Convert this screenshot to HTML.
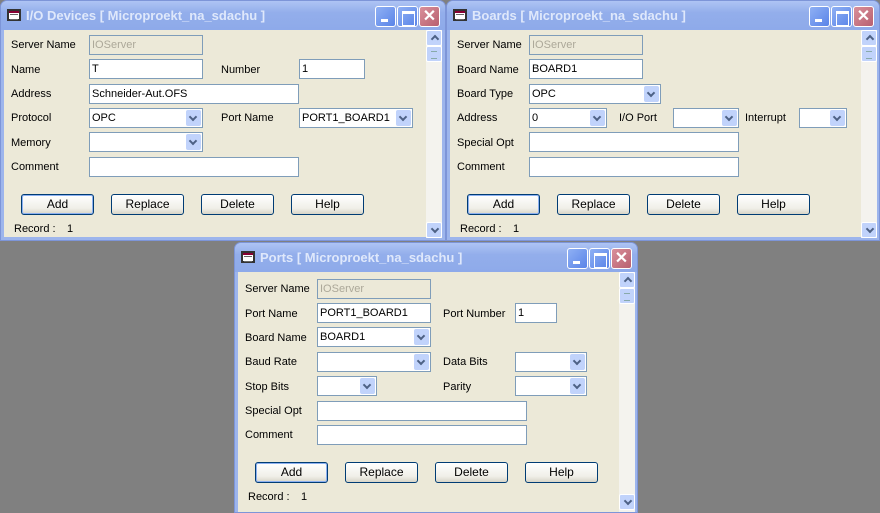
<!DOCTYPE html>
<html><head><meta charset="utf-8"><style>
*{box-sizing:border-box;margin:0;padding:0}
body{width:880px;height:513px;background:#808080;position:relative;overflow:hidden;font-family:"Liberation Sans",Tahoma,sans-serif;font-size:11px;color:#000}
.win{position:absolute;background:#9db5ec;border-radius:7px 7px 0 0;border:1px solid #7d95d8}
.tb{position:absolute;left:0;top:0;right:0;height:29px;border-radius:6px 6px 0 0;background:linear-gradient(#aec4f4,#93aeeb 40%,#8eaaea)}
.tt{position:absolute;left:25px;top:7px;color:#dfe8fb;font-weight:bold;font-size:13px;white-space:nowrap}
.ic{position:absolute;left:6px;top:8px;width:14px;height:12px;background:#fff;border:2px solid #333;box-shadow:inset 0 2px 0 #803}
.ic:after{content:"";position:absolute;left:1px;top:3px;width:8px;height:4px;border-top:1px solid #666;border-bottom:1px solid #666}
.bt{position:absolute;top:5px;width:21px;height:21px;border:1px solid #fff;border-radius:3px;background:linear-gradient(135deg,#8fb0f4,#5a84e8);color:#fff;font-weight:bold;text-align:center}
.bt.x{background:linear-gradient(135deg,#d98f9a,#b86070);font-size:16px;line-height:19px}
.bt.mn:after{content:"";position:absolute;left:5px;top:12px;width:7px;height:3px;background:#fff}
.bt.mx:after{content:"";position:absolute;left:4px;top:4px;width:11px;height:11px;border:1px solid #fff;border-top:3px solid #fff}
.cl{position:absolute;left:3px;top:29px;right:3px;bottom:3px;background:#ece9d8}
.l{position:absolute;white-space:nowrap}
.i{position:absolute;background:#fff;border:1px solid #7f9db9;height:20px;padding:3px 0 0 2px;white-space:nowrap;font-size:11px;overflow:hidden}
.i.d{background:#ece9d8;color:#aca899}
.c:after{content:"";position:absolute;right:1px;top:1px;width:15px;height:16px;background:#c1d3fb;border-radius:2px}
.c:before{content:"";position:absolute;right:6px;top:5px;width:4px;height:4px;border-right:2px solid #4d6185;border-bottom:2px solid #4d6185;transform:rotate(45deg);z-index:1}
.b{position:absolute;width:73px;height:21px;border:1px solid #003c74;border-radius:3px;background:linear-gradient(#fff,#f0efe8 70%,#d8d5c8);text-align:center;line-height:19px;font-size:12px}
.b.def{box-shadow:inset 0 0 0 1px #8cb0f0}
.sb{position:absolute;width:16px;background:#f4f3ee}
.sa{position:absolute;left:0;width:16px;height:16px;background:#c1d3fb;border:1px solid #fff;border-radius:2px}
.sa.u:after,.sa.dn:after{content:"";position:absolute;left:5px;width:4px;height:4px;border-left:2px solid #4d6185;border-top:2px solid #4d6185;transform:rotate(45deg);top:5px}
.sa.dn:after{transform:rotate(225deg);top:3px}
.sa.t:after{content:"";position:absolute;left:4px;top:4px;width:6px;height:6px;border-top:1px solid #8aa;border-bottom:1px solid #8aa}
</style></head><body>

<!-- I/O Devices -->
<div class="win" style="left:0;top:0;width:446px;height:241px">
<div class="tb"><div class="ic"></div><div class="tt">I/O Devices [ Microproekt_na_sdachu ]</div>
<div class="bt mn" style="left:374px"></div><div class="bt mx" style="left:396px"></div><div class="bt x" style="left:418px">✕</div></div>
<div class="cl"></div>
<div class="sb" style="left:425px;top:29px;height:208px"><div class="sa u" style="top:0"></div><div class="sa t" style="top:16px"></div><div class="sa dn" style="top:192px"></div></div>
<span class="l" style="left:10px;top:38px">Server Name</span><div class="i d" style="left:88px;top:34px;width:114px">IOServer</div>
<span class="l" style="left:10px;top:63px">Name</span><div class="i" style="left:88px;top:58px;width:114px">T</div>
<span class="l" style="left:220px;top:63px">Number</span><div class="i" style="left:298px;top:58px;width:66px">1</div>
<span class="l" style="left:10px;top:87px">Address</span><div class="i" style="left:88px;top:83px;width:210px">Schneider-Aut.OFS</div>
<span class="l" style="left:10px;top:111px">Protocol</span><div class="i c" style="left:88px;top:107px;width:114px">OPC</div>
<span class="l" style="left:220px;top:111px">Port Name</span><div class="i c" style="left:298px;top:107px;width:114px">PORT1_BOARD1</div>
<span class="l" style="left:10px;top:136px">Memory</span><div class="i c" style="left:88px;top:131px;width:114px"></div>
<span class="l" style="left:10px;top:160px">Comment</span><div class="i" style="left:88px;top:156px;width:210px"></div>
<div class="b def" style="left:20px;top:193px">Add</div><div class="b" style="left:110px;top:193px">Replace</div><div class="b" style="left:200px;top:193px">Delete</div><div class="b" style="left:290px;top:193px">Help</div>
<span class="l" style="left:13px;top:222px">Record :</span><span class="l" style="left:66px;top:222px">1</span>
</div>

<!-- Boards -->
<div class="win" style="left:446px;top:0;width:434px;height:241px">
<div class="tb"><div class="ic"></div><div class="tt">Boards [ Microproekt_na_sdachu ]</div>
<div class="bt mn" style="left:362px"></div><div class="bt mx" style="left:384px"></div><div class="bt x" style="left:406px">✕</div></div>
<div class="cl"></div>
<div class="sb" style="left:414px;top:29px;height:208px"><div class="sa u" style="top:0"></div><div class="sa t" style="top:16px"></div><div class="sa dn" style="top:192px"></div></div>
<span class="l" style="left:10px;top:38px">Server Name</span><div class="i d" style="left:82px;top:34px;width:114px">IOServer</div>
<span class="l" style="left:10px;top:63px">Board Name</span><div class="i" style="left:82px;top:58px;width:114px">BOARD1</div>
<span class="l" style="left:10px;top:87px">Board Type</span><div class="i c" style="left:82px;top:83px;width:132px">OPC</div>
<span class="l" style="left:10px;top:111px">Address</span><div class="i c" style="left:82px;top:107px;width:78px">0</div>
<span class="l" style="left:172px;top:111px">I/O Port</span><div class="i c" style="left:226px;top:107px;width:66px"></div>
<span class="l" style="left:298px;top:111px">Interrupt</span><div class="i c" style="left:352px;top:107px;width:48px"></div>
<span class="l" style="left:10px;top:136px">Special Opt</span><div class="i" style="left:82px;top:131px;width:210px"></div>
<span class="l" style="left:10px;top:160px">Comment</span><div class="i" style="left:82px;top:156px;width:210px"></div>
<div class="b def" style="left:20px;top:193px">Add</div><div class="b" style="left:110px;top:193px">Replace</div><div class="b" style="left:200px;top:193px">Delete</div><div class="b" style="left:290px;top:193px">Help</div>
<span class="l" style="left:13px;top:222px">Record :</span><span class="l" style="left:66px;top:222px">1</span>
</div>

<!-- Ports -->
<div class="win" style="left:234px;top:242px;width:404px;height:271px">
<div class="tb"><div class="ic"></div><div class="tt">Ports [ Microproekt_na_sdachu ]</div>
<div class="bt mn" style="left:332px"></div><div class="bt mx" style="left:354px"></div><div class="bt x" style="left:376px">✕</div></div>
<div class="cl" style="bottom:0"></div>
<div class="sb" style="left:384px;top:29px;height:240px"><div class="sa u" style="top:0"></div><div class="sa t" style="top:16px"></div><div class="sa dn" style="top:222px"></div></div>
<span class="l" style="left:10px;top:40px">Server Name</span><div class="i d" style="left:82px;top:36px;width:114px">IOServer</div>
<span class="l" style="left:10px;top:65px">Port Name</span><div class="i" style="left:82px;top:60px;width:114px">PORT1_BOARD1</div>
<span class="l" style="left:208px;top:65px">Port Number</span><div class="i" style="left:280px;top:60px;width:42px">1</div>
<span class="l" style="left:10px;top:89px">Board Name</span><div class="i c" style="left:82px;top:84px;width:114px">BOARD1</div>
<span class="l" style="left:10px;top:113px">Baud Rate</span><div class="i c" style="left:82px;top:109px;width:114px"></div>
<span class="l" style="left:208px;top:113px">Data Bits</span><div class="i c" style="left:280px;top:109px;width:72px"></div>
<span class="l" style="left:10px;top:138px">Stop Bits</span><div class="i c" style="left:82px;top:133px;width:60px"></div>
<span class="l" style="left:208px;top:138px">Parity</span><div class="i c" style="left:280px;top:133px;width:72px"></div>
<span class="l" style="left:10px;top:162px">Special Opt</span><div class="i" style="left:82px;top:158px;width:210px"></div>
<span class="l" style="left:10px;top:186px">Comment</span><div class="i" style="left:82px;top:182px;width:210px"></div>
<div class="b def" style="left:20px;top:219px">Add</div><div class="b" style="left:110px;top:219px">Replace</div><div class="b" style="left:200px;top:219px">Delete</div><div class="b" style="left:290px;top:219px">Help</div>
<span class="l" style="left:13px;top:248px">Record :</span><span class="l" style="left:66px;top:248px">1</span>
</div>
</body></html>
